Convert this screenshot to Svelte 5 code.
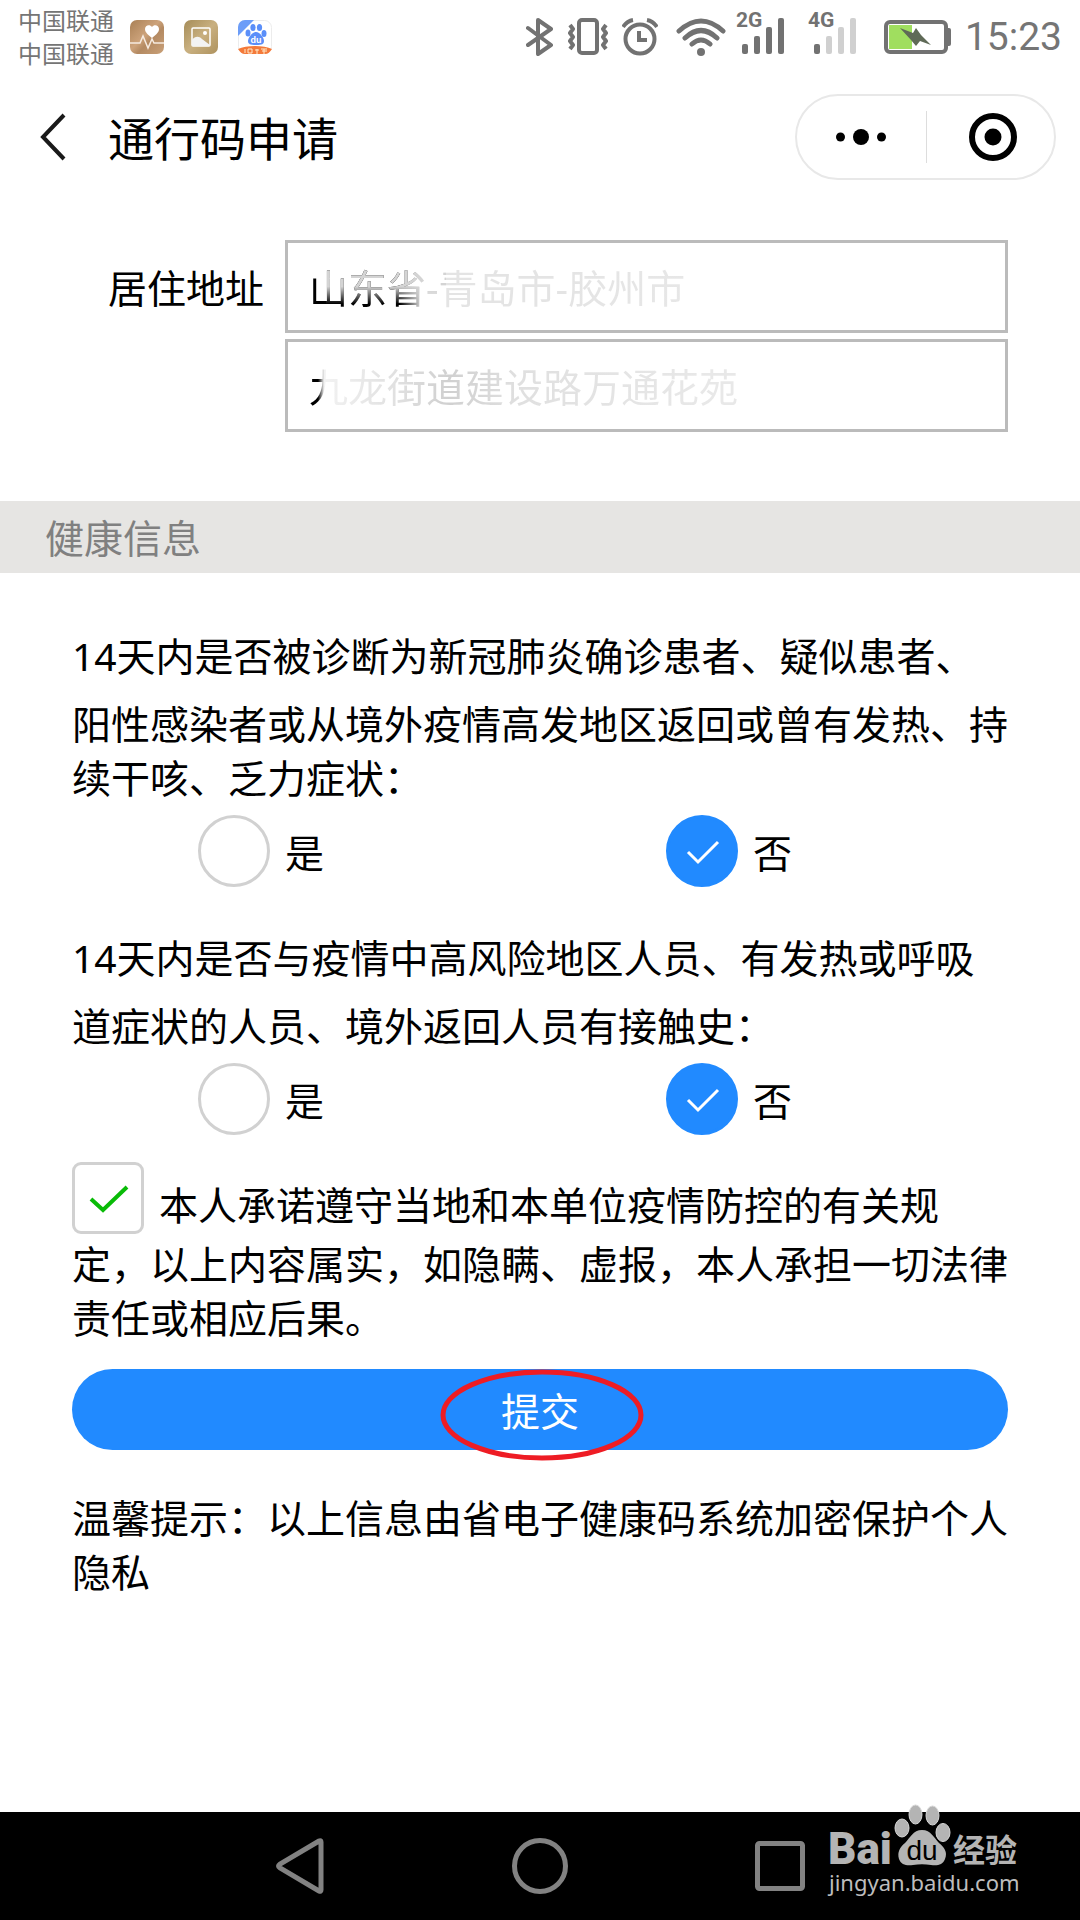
<script lang="ts">
  let region = $state("山东省-青岛市-胶州市");
  let street = $state("九龙街道建设路万通花苑");
  let agreed = $state(true);

  let questions = $state([
    {
      id: "diagnosed",
      text: "14天内是否被诊断为新冠肺炎确诊患者、疑似患者、阳性感染者或从境外疫情高发地区返回或曾有发热、持续干咳、乏力症状：",
      answer: "否",
    },
    {
      id: "contact",
      text: "14天内是否与疫情中高风险地区人员、有发热或呼吸道症状的人员、境外返回人员有接触史：",
      answer: "否",
    },
  ]);
</script>

{#snippet signal(label: string, level: number)}
  <svg width="50" height="56" viewBox="0 0 50 56">
    <text x="0" y="18" class="net">{label}</text>
    {#each [10, 18, 27, 36] as h, i}
      <rect x={6 + i * 12} y={45 - h} width="6" height={h} rx="2" fill={i < level ? "#727272" : "#d0d0d0"} />
    {/each}
  </svg>
{/snippet}

<div class="screen">
  <div class="status">
    <div class="carriers">
      <span>中国联通</span>
      <span>中国联通</span>
    </div>
    <div class="apps">
      <svg width="34" height="34" viewBox="0 0 34 34">
        <defs>
          <linearGradient id="bronze" x1="0" y1="0" x2="1" y2="1">
            <stop offset="0" stop-color="#a98055" />
            <stop offset="0.45" stop-color="#cda37b" />
            <stop offset="0.6" stop-color="#b48a62" />
            <stop offset="1" stop-color="#c9a078" />
          </linearGradient>
        </defs>
        <rect width="34" height="34" rx="7" fill="url(#bronze)" />
        <path d="M22 18c-3-3-7-5-7-9 0-4 5-5 7-2 2-3 7-2 7 2 0 4-4 6-7 9z" fill="#fff" />
        <path d="M0 23h10l3-7 5 12 4-9 2 4h10" fill="none" stroke="#f6eadf" stroke-width="1.5" />
      </svg>
      <svg width="34" height="34" viewBox="0 0 34 34">
        <defs>
          <linearGradient id="gold" x1="0" y1="0" x2="1" y2="1">
            <stop offset="0" stop-color="#a58c58" />
            <stop offset="0.5" stop-color="#c9b080" />
            <stop offset="1" stop-color="#ae925e" />
          </linearGradient>
        </defs>
        <rect width="34" height="34" rx="7" fill="url(#gold)" />
        <rect x="8" y="8" width="18" height="18" rx="1" fill="none" stroke="#fff" stroke-width="1.5" />
        <path d="M8 20c3-4 7-4 10-1l8 6v1H8z" fill="#f3f3f3" />
        <circle cx="21" cy="13" r="2" fill="#fff" />
      </svg>
      <svg width="34" height="34" viewBox="0 0 34 34">
        <rect x="0.5" y="0.5" width="33" height="33" rx="7" fill="#fff" stroke="#ececec" />
        <path d="M7 0h9L0 16V7a7 7 0 0 1 7-7z" fill="#6c9df8" />
        <g fill="#5b8ff9">
          <ellipse cx="10" cy="13" rx="2.5" ry="3.5" />
          <ellipse cx="15" cy="7.5" rx="2.6" ry="3.5" />
          <ellipse cx="21.5" cy="7.5" rx="2.6" ry="3.5" />
          <ellipse cx="26" cy="13.5" rx="2.5" ry="3.5" />
          <path d="M18 12c4 0 8 6 8 9s-2 4-8 4-8-1-8-4 4-9 8-9z" />
        </g>
        <text x="18" y="23" text-anchor="middle" class="mini">du</text>
        <path d="M0 29c8-4 26-4 34 0-2 3-4 5-7 5H7c-3 0-5-2-7-5z" fill="#f47a3a" />
        <path d="M7 29v4M10 29h4v4h-4zM17 30h4M19 29v5M23 29h6M24 31h5M26 29v5" stroke="#ffe9c8" fill="none" />
      </svg>
    </div>

    <div class="system">
      <svg width="28" height="40" viewBox="0 0 28 40" fill="none" stroke="#727272" stroke-width="4" stroke-linecap="round" stroke-linejoin="round">
        <path d="M2 11l23 17-13 9V3l13 9L2 28" />
      </svg>
      <svg width="40" height="38" viewBox="0 0 40 38" fill="none" stroke="#727272">
        <rect x="11" y="2" width="18" height="33" rx="3" stroke-width="4" />
        <path d="M2 7l3 4-3 4 3 4-3 4 3 4-3 4M38 7l-3 4 3 4-3 4 3 4-3 4 3 4" stroke-width="4" stroke-linejoin="round" />
      </svg>
      <svg width="36" height="38" viewBox="0 0 36 38" fill="none" stroke="#727272" stroke-width="4">
        <circle cx="18" cy="21" r="14.5" />
        <path d="M17 13v9h8" />
        <path d="M1 9Q5 3 11 2M35 9Q31 3 25 2" />
      </svg>
      <svg width="54" height="38" viewBox="-4 0 54 38" fill="none" stroke="#727272" stroke-width="5" stroke-linecap="round">
        <path d="M3 13Q25-7 47 13M9 20Q25 5 41 20M16 26Q25 18 34 26" />
        <circle cx="25" cy="34" r="4" fill="#727272" stroke="none" />
      </svg>
      <div class="signals">
        {@render signal("2G", 4)}
        {@render signal("4G", 1)}
      </div>
      <svg width="67" height="34" viewBox="0 0 67 34">
        <rect x="2" y="2" width="60" height="30" rx="4" fill="none" stroke="#727272" stroke-width="4" />
        <rect x="5" y="5" width="23" height="24" fill="#a0de5f" />
        <path d="M63 8h2q2 0 2 2v14q0 2-2 2h-2z" fill="#727272" />
        <path d="M16 8l13 5 3-5 5 7 10 10-11-4-4 5-5-6z" fill="#5f6a57" />
      </svg>
      <time>15:23</time>
    </div>
  </div>

  <header>
    <button class="back" aria-label="返回">
      <svg width="26" height="48" viewBox="0 0 26 48">
        <path d="M24 2L3 24l21 22" fill="none" stroke="#1a1a1a" stroke-width="4" />
      </svg>
    </button>
    <h1>通行码申请</h1>
    <div class="capsule">
      <button aria-label="更多">
        <svg width="50" height="18" viewBox="0 0 50 18">
          <circle cx="4.5" cy="9" r="4.5" />
          <circle cx="25" cy="9" r="8" />
          <circle cx="45.5" cy="9" r="4.5" />
        </svg>
      </button>
      <button class="close" aria-label="关闭">
        <svg width="48" height="48" viewBox="0 0 48 48">
          <circle cx="24" cy="24" r="21" fill="none" stroke="#000" stroke-width="6" />
          <circle cx="24" cy="24" r="8.5" />
        </svg>
      </button>
    </div>
  </header>

  <main>
    <section class="address">
      <label for="region">居住地址</label>
      <div class="fields">
        <input id="region" class="region" type="text" bind:value={region} />
        <input class="street" type="text" aria-label="详细地址" bind:value={street} />
      </div>
    </section>

    <h2>健康信息</h2>

    <form onsubmit={(e) => e.preventDefault()}>
      {#each questions as question (question.id)}
        <fieldset>
          <legend>{question.text}</legend>
          <div class="options">
            {#each ["是", "否"] as option}
              <label>
                <span class="tick">
                  <input type="radio" name={question.id} value={option} bind:group={question.answer} />
                  <svg viewBox="0 0 72 72"><path d="M22 37l10 10 20-20" /></svg>
                </span>
                <span class="name">{option}</span>
              </label>
            {/each}
          </div>
        </fieldset>
      {/each}

      <label class="pledge">
        <span class="tick">
          <input type="checkbox" bind:checked={agreed} />
          <svg viewBox="0 0 72 72"><path d="M19 37l12 11 24-23" /></svg>
        </span>本人承诺遵守当地和本单位疫情防控的有关规定，以上内容属实，如隐瞒、虚报，本人承担一切法律责任或相应后果。
      </label>

      <div class="submit">
        <button type="submit">提交</button>
        <svg width="206" height="92" viewBox="0 0 206 92">
          <ellipse cx="103" cy="46" rx="99" ry="43" fill="none" stroke="#ee1c24" stroke-width="5" />
        </svg>
      </div>

      <p>温馨提示：以上信息由省电子健康码系统加密保护个人隐私</p>
    </form>
  </main>

  <nav>
    <button aria-label="后退">
      <svg width="60" height="60" viewBox="0 0 60 60"><path d="M51 6v48q0 2-2 1L10 32q-3-2 0-4L49 5q2-1 2 1z" /></svg>
    </button>
    <button aria-label="主页">
      <svg width="60" height="60" viewBox="0 0 60 60"><circle cx="30" cy="30" r="25.5" /></svg>
    </button>
    <button aria-label="最近任务">
      <svg width="60" height="60" viewBox="0 0 60 60"><rect x="7.5" y="7.5" width="45" height="45" rx="2" /></svg>
    </button>
    <svg class="brand" width="200" height="96" viewBox="0 0 200 96">
      <text x="0" y="60" class="bai">Bai</text>
      <g fill="#b4b4b4" stroke="#d8d8d8" stroke-width="1">
        <ellipse cx="74" cy="24" rx="7" ry="9" />
        <ellipse cx="87.5" cy="10.5" rx="6.5" ry="9.5" />
        <ellipse cx="104.5" cy="11.5" rx="6.5" ry="9.5" />
        <ellipse cx="115" cy="28.5" rx="7" ry="9" />
      </g>
      <path d="M94 26c9 0 12 8 17 13 5 4 9 9 6 16-2 6-8 7-14 6-6-1-12-1-18 0s-12 0-14-6c-2-7 1-12 6-16 5-5 8-13 17-13z" fill="#b4b4b4" />
      <text x="94" y="56" text-anchor="middle" class="du">du</text>
      <text x="125" y="58" class="exp">经验</text>
      <text x="1" y="87" class="host">jingyan.baidu.com</text>
    </svg>
  </nav>
</div>

<style>
  :global(body) {
    background: #fff;
  }

  .screen {
    min-height: 100vh;
    display: flex;
    flex-direction: column;
    color: #000;
    font-family: "Noto Sans", "Noto Sans CJK SC", sans-serif;
    font-size: 39px;
    line-height: 54px;
  }

  button {
    padding: 0;
    border: 0;
    background: none;
    color: inherit;
    font: inherit;
    cursor: pointer;
  }

  svg {
    display: block;
  }

  .status {
    display: flex;
    align-items: center;
    height: 74px;
    padding: 0 18px;
    color: #757575;
  }

  .carriers {
    display: flex;
    flex-direction: column;
    font-size: 24px;
    line-height: 33px;
  }

  .apps {
    display: flex;
    gap: 20px;
    margin-left: 16px;
  }

  .mini {
    fill: #fff;
    font: bold 9px "Liberation Sans", sans-serif;
  }

  .system {
    display: flex;
    align-items: center;
    gap: 14px;
    margin-left: auto;
  }

  .signals {
    display: flex;
    gap: 22px;
    margin: 0 12px 0 -4px;
  }

  .net {
    fill: #727272;
    font: bold 21px Roboto, sans-serif;
  }

  time {
    font-family: Roboto, sans-serif;
    line-height: 76px;
  }

  header {
    display: flex;
    align-items: center;
    height: 126px;
    padding: 0 24px 0 40px;
  }

  h1 {
    margin: 0 0 0 42px;
    padding-top: 2px;
    font-size: 46px;
    font-weight: 400;
    line-height: 60px;
  }

  .capsule {
    display: flex;
    box-sizing: border-box;
    width: 261px;
    height: 86px;
    margin-left: auto;
    border: 2px solid #e8e8e8;
    border-radius: 43px;
  }

  .capsule button {
    flex: 1;
    display: grid;
    place-items: center;
  }

  .capsule .close {
    grid-template-columns: 1px 1fr;
  }

  .close::before {
    content: "";
    width: 1px;
    height: 52px;
    background: #ddd;
  }

  .close svg {
    margin-left: 5px;
  }

  .address {
    display: flex;
    align-items: flex-start;
    padding: 40px 72px 69px 108px;
  }

  .address label {
    flex: none;
    margin-right: 21px;
    line-height: 96px;
  }

  .fields {
    flex: 1;
    display: grid;
    gap: 6px;
  }

  .fields input {
    box-sizing: border-box;
    width: 100%;
    min-width: 0;
    height: 93px;
    padding: 0 21px 2px;
    border: 3px solid #bbb;
    border-radius: 0;
    outline: none;
    color: transparent;
    caret-color: #000;
    font: inherit;
    background-clip: text;
  }

  .fields .region {
    background-image:
      linear-gradient(#d4d4d4 50%, transparent 70%),
      linear-gradient(90deg, #000 112px, #e4e4e4 134px, #e4e4e4 270px, #eee 100%);
    background-position: 38px 0, 0 0;
    background-size: 120px 100%, 100% 100%;
    background-repeat: no-repeat;
  }

  .fields .street {
    background-image: linear-gradient(90deg, #000 30px, #f2f2f2 36px, #e0e0e0 110px, #d0d0d0 160px, #e0e0e0 230px, #e8e8e8 420px);
  }

  h2 {
    margin: 0;
    padding: 2px 45px 0;
    background: #e6e5e3;
    color: #808080;
    font-size: 39px;
    font-weight: 400;
    line-height: 70px;
  }

  form {
    padding: 42px 72px;
  }

  fieldset {
    min-width: 0;
    margin: 0 0 30px;
    padding: 0;
    border: 0;
  }

  legend {
    padding: 0;
  }

  legend::first-line {
    line-height: 82px;
  }

  .options {
    display: grid;
    grid-template-columns: 1fr 1fr;
    padding-top: 10px;
  }

  .options label {
    display: flex;
    align-items: center;
    padding-left: 126px;
  }

  .name {
    padding-top: 4px;
  }

  .tick {
    position: relative;
    display: inline-block;
    width: 72px;
    height: 72px;
    margin-right: 15px;
  }

  .tick input {
    appearance: none;
    display: block;
    box-sizing: border-box;
    width: 100%;
    height: 100%;
    margin: 0;
    border: 3px solid #d1d1d1;
    border-radius: 50%;
  }

  .tick input:checked[type="radio"] {
    border-color: #218aff;
    background: #218aff;
  }

  .tick input[type="checkbox"] {
    border-radius: 9px;
  }

  .tick svg {
    position: absolute;
    inset: 0;
    visibility: hidden;
    fill: none;
    stroke: #fff;
    stroke-width: 3;
    pointer-events: none;
  }

  .tick input:checked + svg {
    visibility: visible;
  }

  .pledge {
    display: block;
    margin: -3px 0 24px;
  }

  .pledge .tick {
    margin-bottom: 3px;
    vertical-align: -17px;
  }

  .pledge svg {
    stroke: #09bb07;
    stroke-width: 4;
  }

  .submit {
    position: relative;
  }

  .submit button {
    display: block;
    width: 100%;
    height: 81px;
    padding-top: 2px;
    border-radius: 41px;
    background: #218aff;
    color: #fff;
  }

  /* hand-drawn ring around the button text */
  .submit svg {
    position: absolute;
    top: 0;
    left: 50%;
    margin-left: -101px;
    pointer-events: none;
  }

  p {
    margin: 41px 0 0;
  }

  nav {
    position: relative;
    display: flex;
    justify-content: center;
    gap: 180px;
    height: 108px;
    margin-top: auto;
    background: #000;
  }

  nav button svg {
    fill: none;
    stroke: #828282;
    stroke-width: 5;
  }

  .brand {
    position: absolute;
    right: 52px;
    bottom: 20px;
    overflow: visible;
  }

  .bai {
    fill: #b4b4b4;
    font: 900 44px Roboto, sans-serif;
  }

  .du {
    fill: #000;
    font: 28px "Liberation Sans", sans-serif;
  }

  .exp {
    fill: #b4b4b4;
    font: bold 32px "Noto Sans CJK SC", sans-serif;
  }

  .host {
    fill: #bdbdbd;
    font: 22px "Noto Sans", sans-serif;
  }
</style>
